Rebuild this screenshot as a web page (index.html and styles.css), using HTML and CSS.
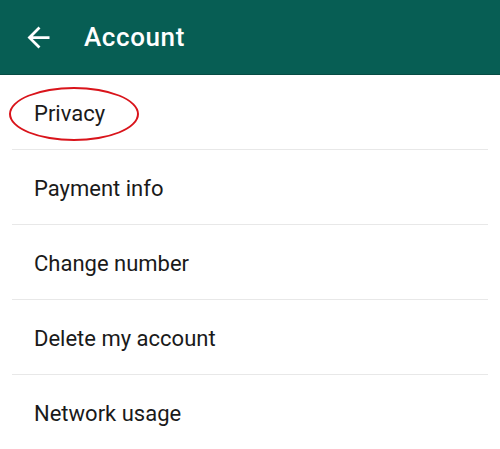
FILE: index.html
```html
<!DOCTYPE html>
<html>
<head>
<meta charset="utf-8">
<link rel="stylesheet" href="styles.css">
</head>
<body>
<header class="toolbar">
  <svg class="back" viewBox="0 0 24 24" width="33" height="33"><path fill="#fff" d="M20 11H7.83l5.59-5.59L12 4l-8 8 8 8 1.41-1.41L7.83 13H20v-2z"/></svg>
  <h1 class="title">Account</h1>
</header>
<ul class="list">
  <li class="item"><span class="label">Privacy</span><span class="circle"></span></li>
  <li class="item"><span class="label">Payment info</span></li>
  <li class="item"><span class="label">Change number</span></li>
  <li class="item"><span class="label">Delete my account</span></li>
  <li class="item"><span class="label">Network usage</span></li>
</ul>
</body>
</html>
```
FILE: styles.css
```css
html, body {
  margin: 0;
  padding: 0;
  background: #fff;
  font-family: Roboto, "Noto Sans", sans-serif;
  overflow: hidden;
}
.toolbar {
  height: 75px;
  background: #075e54;
  display: flex;
  align-items: center;
  padding-left: 22px;
  box-sizing: border-box;
  border-bottom: 1px solid #064c44;
}
.back {
  display: block;
  margin-top: 1px;
}
.title {
  margin: 0 0 0 29px;
  color: #fff;
  font-size: 26px;
  font-weight: 500;
  letter-spacing: 0.6px;
}
.list {
  list-style: none;
  margin: 0;
  padding: 0 12px;
}
.item {
  position: relative;
  height: 74px;
  border-bottom: 1px solid #e8e8e8;
  display: flex;
  align-items: center;
  padding-left: 22px;
}
.label {
  font-size: 22px;
  color: #1a1a1a;
  padding-top: 2px;
}
.circle {
  position: absolute;
  left: -3px;
  top: 12px;
  width: 126px;
  height: 50px;
  border: 2px solid #d9141b;
  border-radius: 50%;
}
```
